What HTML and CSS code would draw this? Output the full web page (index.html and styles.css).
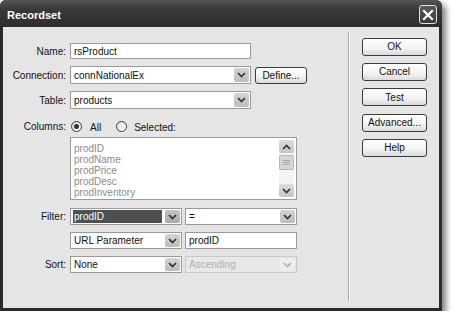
FILE: index.html
```html
<!DOCTYPE html>
<html>
<head>
<meta charset="utf-8">
<link rel="stylesheet" href="styles.css">
</head>
<body>
<div class="window">
  <div class="titlebar">
    <span class="title">Recordset</span>
    <div class="close"><svg width="12" height="12" viewBox="0 0 12 12"><path d="M2 2L10 10M10 2L2 10" stroke="#fff" stroke-width="2.2" stroke-linecap="square" fill="none"/></svg></div>
  </div>
  <div class="client">
    <div class="form">
      <div class="row h16">
        <span class="lbl">Name:</span>
        <div class="input w181">rsProduct</div>
      </div>
      <div class="row h18">
        <span class="lbl">Connection:</span>
        <div class="select w181"><span class="val">connNationalEx</span><span class="arrow"><svg width="9" height="6" viewBox="0 0 9 6"><path d="M1 1L4.5 4.5L8 1" stroke="#333" stroke-width="1.7" fill="none"/></svg></span></div>
        <div class="define">Define...</div>
      </div>
      <div class="row h18">
        <span class="lbl">Table:</span>
        <div class="select w181"><span class="val">products</span><span class="arrow"><svg width="9" height="6" viewBox="0 0 9 6"><path d="M1 1L4.5 4.5L8 1" stroke="#333" stroke-width="1.7" fill="none"/></svg></span></div>
      </div>
      <div class="row h14 cols">
        <span class="lbl">Columns:</span>
        <span class="radio on"></span><span class="rtext first">All</span>
        <span class="radio"></span><span class="rtext">Selected:</span>
      </div>
      <div class="row listrow">
        <span class="lbl"></span>
        <div class="list">
          <div class="items">
            <div>prodID</div>
            <div>prodName</div>
            <div>prodPrice</div>
            <div>prodDesc</div>
            <div>prodInventory</div>
          </div>
          <div class="scroll">
            <div class="sb-btn"><svg width="9" height="6" viewBox="0 0 9 6"><path d="M1 5L4.5 1.5L8 5" stroke="#333" stroke-width="1.7" fill="none"/></svg></div>
            <div class="thumb"><i></i><i></i><i></i></div>
            <div class="track"></div>
            <div class="sb-btn"><svg width="9" height="6" viewBox="0 0 9 6"><path d="M1 1L4.5 4.5L8 1" stroke="#333" stroke-width="1.7" fill="none"/></svg></div>
          </div>
        </div>
      </div>
      <div class="row h17 filter">
        <span class="lbl">Filter:</span>
        <div class="select w112"><span class="val hl">prodID</span><span class="arrow dark"><svg width="9" height="6" viewBox="0 0 9 6"><path d="M1 1L4.5 4.5L8 1" stroke="#333" stroke-width="1.7" fill="none"/></svg></span></div>
        <div class="select w112 gap3"><span class="val">=</span><span class="arrow"><svg width="9" height="6" viewBox="0 0 9 6"><path d="M1 1L4.5 4.5L8 1" stroke="#333" stroke-width="1.7" fill="none"/></svg></span></div>
      </div>
      <div class="row h17 r7">
        <span class="lbl"></span>
        <div class="select w112"><span class="val">URL Parameter</span><span class="arrow"><svg width="9" height="6" viewBox="0 0 9 6"><path d="M1 1L4.5 4.5L8 1" stroke="#333" stroke-width="1.7" fill="none"/></svg></span></div>
        <div class="input w112 gap3">prodID</div>
      </div>
      <div class="row h17 r7">
        <span class="lbl">Sort:</span>
        <div class="select w112"><span class="val">None</span><span class="arrow"><svg width="9" height="6" viewBox="0 0 9 6"><path d="M1 1L4.5 4.5L8 1" stroke="#333" stroke-width="1.7" fill="none"/></svg></span></div>
        <div class="select w112 gap3 disabled"><span class="val">Ascending</span><span class="arrow"><svg width="9" height="6" viewBox="0 0 9 6"><path d="M1 1L4.5 4.5L8 1" stroke="#b0b0b0" stroke-width="1.7" fill="none"/></svg></span></div>
      </div>
    </div>
    <div class="sep"></div>
    <div class="buttons">
      <div class="btn">OK</div>
      <div class="btn">Cancel</div>
      <div class="btn">Test</div>
      <div class="btn">Advanced...</div>
      <div class="btn">Help</div>
    </div>
  </div>
</div>
</body>
</html>
```
FILE: styles.css
```css
body {
  margin: 0;
  background: #fff;
  font-family: "Liberation Sans", Arial, sans-serif;
  font-size: 10px;
  color: #111;
}
.window {
  width: 442px;
  height: 311px;
  display: flex;
  flex-direction: column;
  background: #2b2b2b;
  border-radius: 6px 6px 0 0;
  box-shadow: 4px 4px 6px rgba(0, 0, 0, 0.5);
}
.titlebar {
  height: 27px;
  flex: none;
  display: flex;
  align-items: center;
  padding: 0 5px 0 7px;
  border-radius: 6px 6px 0 0;
  background: linear-gradient(#555, #383838 35%, #2e2e2e);
}
.title {
  flex: 1;
  color: #fff;
  font-weight: bold;
  font-size: 11px;
  padding-top: 2px;
}
.close {
  align-self: flex-start;
  margin-top: 5px;
  width: 18px;
  height: 19px;
  box-sizing: border-box;
  border: 1px solid #e0e0e0;
  border-radius: 3px;
  background: linear-gradient(#5a5a5a, #3a3a3a);
  display: flex;
  align-items: center;
  justify-content: center;
}
.client {
  flex: 1;
  margin: 0 3px 3px;
  background: #e5e5e5;
  display: flex;
}
.form {
  width: 345px;
  flex: none;
  box-sizing: border-box;
  padding: 16px 0 0 5px;
}
.row {
  display: flex;
  align-items: center;
  margin-top: 7px;
}
.row:first-child { margin-top: 0; }
.h16 { height: 16px; }
.h18 { height: 18px; }
.h17 { height: 17px; }
.h14 { height: 14px; }
.cols { margin-top: 10px; }
.listrow { margin-top: 4px; align-items: flex-start; }
.filter { margin-top: 8px; }
.lbl {
  width: 58px;
  margin-right: 4px;
  text-align: right;
  flex: none;
}
.input {
  height: 100%;
  box-sizing: border-box;
  border: 1px solid #9a9a9a;
  background: #fff;
  padding-left: 3px;
  display: flex;
  align-items: center;
}
.w181 { width: 181px; }
.w112 { width: 112px; }
.gap3 { margin-left: 3px; }
.select {
  height: 100%;
  box-sizing: border-box;
  border: 1px solid #9a9a9a;
  background: #fff;
  display: flex;
}
.val {
  flex: 1;
  padding-left: 3px;
  display: flex;
  align-items: center;
  white-space: nowrap;
  overflow: hidden;
}
.val.hl {
  background: #4f4f4f;
  color: #fff;
  margin: 1px 2px 1px 2px;
  padding-left: 1px;
}
.arrow {
  width: 15px;
  margin: 1px;
  border-radius: 2px;
  background: linear-gradient(#d4d4d4, #bdbdbd);
  display: flex;
  align-items: center;
  justify-content: center;
}
.arrow.dark { background: linear-gradient(#c4c4c4, #aaa); }
.disabled {
  background: #e8e8e8;
  border-color: #c8c8c8;
  color: #b0b0b0;
}
.disabled .arrow { background: #ededed; }
.define {
  margin-left: 4px;
  width: 52px;
  height: 17px;
  box-sizing: border-box;
  border: 1px solid #3c3c3c;
  border-radius: 3px;
  background: linear-gradient(#fff, #f2f2f2 60%, #dadada);
  display: flex;
  align-items: center;
  justify-content: center;
}
.radio {
  width: 11px;
  height: 11px;
  box-sizing: border-box;
  border: 1px solid #3a3a3a;
  border-radius: 50%;
  background: linear-gradient(135deg, #dcdcdc, #fff);
  display: flex;
  align-items: center;
  justify-content: center;
  flex: none;
  margin-left: 1px;
}
.radio.on::after {
  content: "";
  width: 5px;
  height: 5px;
  border-radius: 50%;
  background: #333;
}
.rtext {
  padding-top: 3px;
  margin-left: 8px;
}
.rtext.first { margin-right: 14px; }
.cols .radio + .rtext + .radio + .rtext { margin-left: 7px; }
.list {
  width: 227px;
  height: 63px;
  box-sizing: border-box;
  border: 1px solid #9a9a9a;
  background: #fff;
  display: flex;
}
.items {
  flex: 1;
  padding: 5px 0 0 3px;
  color: #8c8c8c;
  line-height: 11px;
}
.scroll {
  width: 15px;
  margin: 2px 2px 2px 0;
  display: flex;
  flex-direction: column;
  background: #f4f4f4;
}
.sb-btn {
  height: 13px;
  border-radius: 2px;
  background: linear-gradient(#dcdcdc, #c6c6c6);
  display: flex;
  align-items: center;
  justify-content: center;
}
.thumb {
  height: 15px;
  margin-top: 2px;
  box-sizing: border-box;
  border: 1px solid #b8b8b8;
  border-radius: 2px;
  background: #d6d6d6;
  display: flex;
  flex-direction: column;
  align-items: center;
  justify-content: center;
  gap: 1px;
}
.thumb i {
  display: block;
  width: 7px;
  height: 1px;
  background: #a8a8a8;
}
.track { flex: 1; }
.sep {
  width: 2px;
  box-sizing: border-box;
  margin: 5px 0 7px;
  border-left: 1px solid #a6a6a6;
  border-right: 1px solid #fff;
}
.buttons {
  margin-left: 12px;
  padding-top: 10.7px;
  display: flex;
  flex-direction: column;
  gap: 7.3px;
}
.btn {
  width: 65px;
  height: 18px;
  box-sizing: border-box;
  border: 1px solid #3c3c3c;
  border-radius: 3px;
  background: linear-gradient(#fff, #f2f2f2 60%, #dadada);
  display: flex;
  align-items: center;
  justify-content: center;
}
```
